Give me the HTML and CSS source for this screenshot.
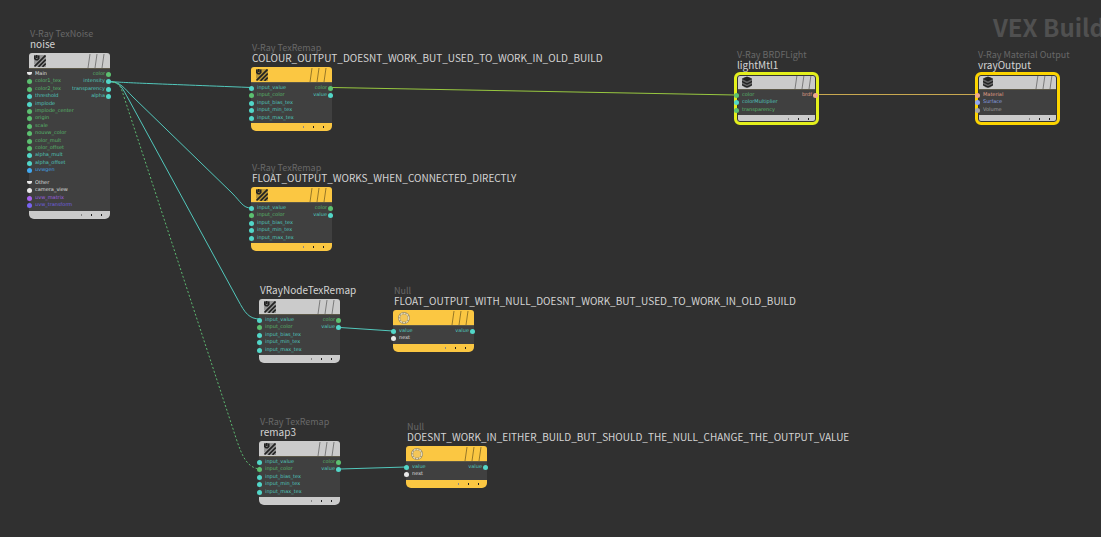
FILE: index.html
```html
<!DOCTYPE html>
<html lang="en">
<head>
<meta charset="utf-8">
<title>VEX Builder network</title>
<link rel="stylesheet" href="styles.css">
</head>
<body>
<main class="canvas">
  <h1 class="context">VEX Build</h1>
  <svg class="wires" aria-hidden="true">
    <path class="teal" d="M109 81.500C130 83 150 83.500 251 87.500"/>
    <path class="teal" d="M109 81.500C121 82 124 88 133 97L232 193C241 202 243 208 251 208"/>
    <path class="teal" d="M109 81.500C121 82 122 88 129 100L238 300C245 313 249 319 260 319"/>
    <path class="green dotted" d="M109 81.500C121 82 121 88 125 100L236 438C242 456 247 468 260 469"/>
    <path class="lime" d="M332 87.500L736 95"/>
    <path class="gold" d="M817 94.500H977"/>
    <path class="teal" d="M340 327.500L393 331"/>
    <path class="teal" d="M340 469L406 467"/>
  </svg>
  <div id="nodes"></div>
  <svg class="symbols" aria-hidden="true">
    <symbol id="icon-texture" viewBox="0 0 12 12">
      <path d="M0 0H12V12H3L0 9Z" opacity=".3"/>
      <path d="M.8 .5V3.500L2 4.700H3.500L4.700 3.500V.5M2.700 0V3M11.500 .5L.5 11.500M11.800 4.500L4.500 11.800M11.800 8.500L8.500 11.800" fill="none" stroke="currentColor" stroke-width="1.700"/>
    </symbol>
    <symbol id="icon-layers" viewBox="0 0 12 12">
      <path d="M1 2.500L4 1H8L11 2.500V9.500L8 11.500H4L1 9.500Z" opacity=".6"/>
      <path d="M6 .5L11 3L6 5.500L1 3Z"/>
      <path d="M1 4.800L6 7.300L11 4.800V6.300L6 8.800L1 6.300ZM1 7.900L6 10.200L11 7.900V9.200L6 11.700L1 9.200Z"/>
    </symbol>
    <symbol id="icon-null" viewBox="0 0 12 12">
      <circle cx="6" cy="6" r="4.900" fill="#f4c658" stroke="#988860" stroke-width="2.200"/>
      <circle cx="6" cy="6" r="4.700" fill="none" stroke="#e4dab8" stroke-width="1.300" stroke-dasharray="2.200 .8"/>
    </symbol>
    <symbol id="icon-flags" viewBox="0 0 18 14">
      <path d="M3 0L1 14M10 0L8 14M17 0L15 14" fill="none" stroke="currentColor"/>
    </symbol>
  </svg>
</main>
<script src="nodes.js"></script>
</body>
</html>
```
FILE: styles.css
```css
body {
  margin: 0;
  background: #303030;
  color: #ccc;
  font-family: "Noto Sans CJK SC", "Noto Sans", sans-serif;
}

.canvas {
  position: relative;
  min-height: 100vh;
  overflow: hidden;
}

.context {
  position: absolute;
  left: 993px;
  top: 10px;
  margin: 0;
  font-size: 24px;
  line-height: 34px;
  white-space: nowrap;
  color: #505050;
}

.wires {
  position: absolute;
  inset: 0;
  width: 100%;
  height: 100%;
  fill: none;
}

.symbols {
  position: absolute;
  width: 0;
  height: 0;
}

.wires .teal { stroke: #52c8bc; }
.wires .green { stroke: #5cb870; }
.wires .lime { stroke: #98c840; }
.wires .gold { stroke: #c8a850; }
.wires .dotted { stroke-dasharray: 2 2; }

.node {
  position: absolute;
  display: flex;
  flex-direction: column;
}

.caption {
  display: flex;
  flex-direction: column;
  justify-content: flex-end;
  height: 24px;
  padding-left: 1px;
  box-sizing: border-box;
  line-height: 10px;
  white-space: nowrap;
}

.caption .type {
  font-size: 9px;
  color: #686868;
}

.caption .name {
  margin: 0;
  padding-bottom: 4px;
  font-size: 10px;
  font-weight: 400;
  color: #d4d4d4;
}

.box {
  --fill: #cbcbcb;
  position: relative;
  width: 81px;
}

.box.yellow { --fill: #fbc742; }

.header {
  display: flex;
  justify-content: space-between;
  align-items: center;
  box-sizing: border-box;
  height: 16px;
  padding: 0 5px;
  border-bottom: 1px solid #5c5848;
  border-radius: 3px 3px 0 0;
  background: var(--fill);
}

.icon {
  width: 12px;
  height: 12px;
  color: #222;
  fill: #222;
}

.flags {
  width: 18px;
  height: 14px;
  color: #0006;
}

.body {
  display: flex;
  justify-content: space-between;
  padding: 1px 0 2px;
  background: #404040;
}

.ports {
  display: grid;
  grid-auto-rows: 7px 8px 7px 8px 7px;
  align-content: start;
  margin: 0 -1px;
  padding: 0;
  list-style: none;
  font: 5px/6px "DejaVu Sans", sans-serif;
}

.column {
  display: grid;
  align-content: start;
  gap: 5px;
}

.inputs { margin-left: -2px; }

.port {
  display: flex;
  gap: 3px;
  color: var(--port);
}

.outputs .port {
  flex-direction: row-reverse;
  gap: 1px;
}

.port::before {
  content: "";
  position: relative;
  z-index: 2;
  flex: none;
  width: 5px;
  height: 5px;
  margin-top: 2px;
  border-radius: 50%;
  background: var(--port);
}

.port.group::before {
  border-radius: 0 0 3px 3px;
  height: 3px;
}

.teal { --port: #52d6c8; }
.green { --port: #5cc070; }
.white { --port: #e8e8e8; }
.blue { --port: #42a8f0; }
.violet { --port: #a864f0; }
.indigo { --port: #7864f0; }
.salmon { --port: #f0a890; }
.sky { --port: #90a8f0; }
.gray { --port: #a8a8a8; }

.label { opacity: .9; }

.footer {
  display: flex;
  justify-content: flex-end;
  align-items: center;
  gap: 9px;
  height: 8px;
  padding-right: 8px;
  border-radius: 0 0 5px 5px;
  background: var(--fill);
}

.footer i {
  width: 1px;
  height: 2px;
  background: #222;
}

.footer i:first-child { background: #888; }

.selected::after {
  content: "";
  position: absolute;
  z-index: 1;
  inset: -2px;
  border: 3px solid var(--ring);
  border-radius: 6px;
  box-shadow: inset 0 0 0 1px #333;
}

.ring-lime { --ring: #e4f01c; }
.ring-gold { --ring: #fcd400; }
```
FILE: nodes.js
```js
const remapIn = [["teal", "input_value"], ["green", "input_color"], ["teal", "input_bias_tex"], ["teal", "input_min_tex"], ["teal", "input_max_tex"]];
const remapOut = [["green", "color"], ["teal", "value"]];
const nullIn = [["teal", "value"], ["white", "next"]];
const nullOut = [["teal", "value"]];

const nodes = [
  { x: 29, y: 29, type: "V-Ray TexNoise", name: "noise", icon: "texture",
    inputs: [
      [["white group", "Main"], ["green", "color1_tex"], ["green", "color2_tex"], ["teal", "threshold"], ["teal", "implode"],
       ["green", "implode_center"], ["green", "origin"], ["green", "scale"], ["green", "nouvw_color"], ["green", "color_mult"],
       ["green", "color_offset"], ["teal", "alpha_mult"], ["teal", "alpha_offset"], ["blue", "uvwgen"]],
      [["white group", "Other"], ["white", "camera_view"], ["violet", "uvw_matrix"], ["indigo", "uvw_transform"]]
    ],
    outputs: [["green", "color"], ["teal", "intensity"], ["teal", "transparency"], ["teal", "alpha"]] },
  { x: 251, y: 43, type: "V-Ray TexRemap", name: "COLOUR_OUTPUT_DOESNT_WORK_BUT_USED_TO_WORK_IN_OLD_BUILD", icon: "texture", style: "yellow", inputs: [remapIn], outputs: remapOut },
  { x: 251, y: 163, type: "V-Ray TexRemap", name: "FLOAT_OUTPUT_WORKS_WHEN_CONNECTED_DIRECTLY", icon: "texture", style: "yellow", inputs: [remapIn], outputs: remapOut },
  { x: 259, y: 275, type: "", name: "VRayNodeTexRemap", icon: "texture", inputs: [remapIn], outputs: remapOut },
  { x: 393, y: 286, type: "Null", name: "FLOAT_OUTPUT_WITH_NULL_DOESNT_WORK_BUT_USED_TO_WORK_IN_OLD_BUILD", icon: "null", style: "yellow", inputs: [nullIn], outputs: nullOut },
  { x: 259, y: 417, type: "V-Ray TexRemap", name: "remap3", icon: "texture", inputs: [remapIn], outputs: remapOut },
  { x: 406, y: 422, type: "Null", name: "DOESNT_WORK_IN_EITHER_BUILD_BUT_SHOULD_THE_NULL_CHANGE_THE_OUTPUT_VALUE", icon: "null", style: "yellow", inputs: [nullIn], outputs: nullOut },
  { x: 736, y: 50, type: "V-Ray BRDFLight", name: "lightMtl1", icon: "layers", style: "selected ring-lime",
    inputs: [[["green", "color"], ["teal", "colorMultiplier"], ["green", "transparency"]]], outputs: [["salmon", "brdf"]] },
  { x: 977, y: 50, type: "V-Ray Material Output", name: "vrayOutput", icon: "layers", style: "selected ring-gold",
    inputs: [[["salmon", "Material"], ["sky", "Surface"], ["gray", "Volume"]]], outputs: [] }
];

const ports = (list, side) =>
  `<ul class="ports ${side}">${list.map(([kind, label]) => `<li class="port ${kind}"><span class="label">${label}</span></li>`).join("")}</ul>`;

document.getElementById("nodes").innerHTML = nodes.map(n => `
  <article class="node" style="left:${n.x}px;top:${n.y}px">
    <header class="caption"><span class="type">${n.type}</span><h2 class="name">${n.name}</h2></header>
    <div class="box ${n.style || ""}">
      <div class="header"><svg class="icon"><use href="#icon-${n.icon}"/></svg><svg class="flags"><use href="#icon-flags"/></svg></div>
      <div class="body"><div class="column">${n.inputs.map(g => ports(g, "inputs")).join("")}</div>${ports(n.outputs, "outputs")}</div>
      <div class="footer"><i></i><i></i><i></i></div>
    </div>
  </article>`).join("");
```
